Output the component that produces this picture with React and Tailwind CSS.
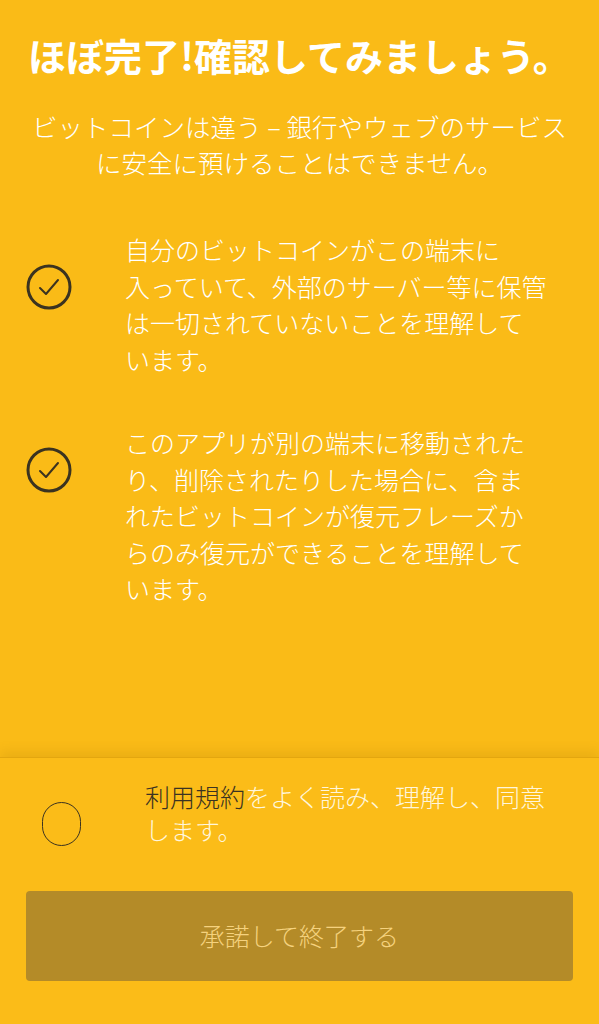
import React from "react";

const font = { fontFamily: '"Noto Sans CJK JP", "Noto Sans", sans-serif' };

function CheckCircle() {
  return (
    <svg width="48" height="48" viewBox="0 0 48 48" className="shrink-0">
      <circle cx="24" cy="24" r="21" fill="none" stroke="#3b3320" strokeWidth="3" />
      <path d="M15 25 L21 31 L33 17" fill="none" stroke="#3b3320" strokeWidth="2" strokeLinecap="round" strokeLinejoin="round" />
    </svg>
  );
}

function Item({ lines, mt, iconMt }) {
  return (
    <div className={`flex items-start ${mt}`}>
      <div className={`w-[125px] pl-[25px] flex ${iconMt}`}>
        <CheckCircle />
      </div>
      <div className="text-[25px] leading-[36.5px] text-white font-light">
        {lines.map((l, i) => (
          <div key={i}>{l}</div>
        ))}
      </div>
    </div>
  );
}

export default function App() {
  return (
    <div className="w-[599px] h-[1024px] bg-[#fabb17] flex flex-col overflow-hidden" style={font}>
      <div className="flex-1">
        <h1 className="pl-[28px] pt-[30px] text-[38px] leading-[50px] font-bold text-white">
          ほぼ完了!確認してみましょう。
        </h1>
        <div className="mt-[28px] text-center text-[25.5px] leading-[36px] text-white font-light">
          <div>ビットコインは違う – 銀行やウェブのサービス</div>
          <div>に安全に預けることはできません。</div>
        </div>
        <Item
          mt="mt-[51px]"
          iconMt="mt-[32px]"
          lines={[
            "自分のビットコインがこの端末に",
            "入っていて、外部のサーバー等に保管",
            "は一切されていないことを理解して",
            "います。",
          ]}
        />
        <Item
          mt="mt-[47px]"
          iconMt="mt-[22px]"
          lines={[
            "このアプリが別の端末に移動された",
            "り、削除されたりした場合に、含ま",
            "れたビットコインが復元フレーズか",
            "らのみ復元ができることを理解して",
            "います。",
          ]}
        />
      </div>
      <div className="h-[267px] shrink-0 border-t border-[#e3a60f] shadow-[0_-6px_10px_rgba(160,110,0,0.16)] bg-[#fbbc18] flex flex-col">
        <div className="flex items-start pt-[22px]">
          <div className="w-[145px] pl-[42px] flex mt-[22px]">
            <div className="w-[39px] h-[44px] rounded-full border-[1.5px] border-[#3b3320]" />
          </div>
          <div className="text-[25px] leading-[33px] text-[#fff6dc] font-light">
            <div>
              <span className="text-[#3a3322]">利用規約</span>をよく読み、理解し、同意
            </div>
            <div>します。</div>
          </div>
        </div>
        <div className="px-[26px] mt-[45px]">
          <button className="w-full h-[90px] rounded-[4px] bg-[#b48b28] text-[25px] font-light text-[#f5d27e] flex items-center justify-center" style={font}>
            承諾して終了する
          </button>
        </div>
      </div>
    </div>
  );
}
